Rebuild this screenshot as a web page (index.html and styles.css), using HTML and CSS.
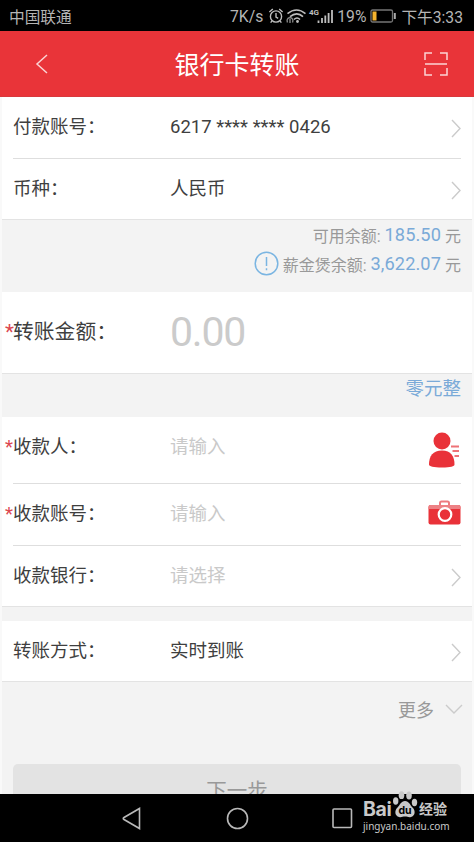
FILE: index.html
```html
<!DOCTYPE html>
<html lang="zh-CN">
<head>
<meta charset="utf-8">
<title>银行卡转账</title>
<link rel="stylesheet" href="styles.css">
</head>
<body>
<div class="phone">
  <div class="status">
    <span class="carrier">中国联通</span>
    <span class="speed">7K/s</span>
    <svg class="status-icons" width="67" height="20" viewBox="0 0 67 20" fill="none" stroke="#bdbdbd" stroke-width="1.4">
      <circle cx="8" cy="10.500" r="5.600"/><path d="M8 7v4l2.200 1.300M1.400 5.900l3.400-3M14.600 5.900l-3.400-3M4 15l-1.400 1.600M12 15l1.400 1.600"/>
      <path d="M19.500 7.700Q28.500 .3 37.500 7.700M22 10.700Q29 5 35 10.700M26 13.500Q29 10.500 32 13.500" stroke-width="1.600"/>
      <circle cx="29.500" cy="15.500" r="1.400" fill="#bdbdbd" stroke="none"/>
      <path d="M19.500 16.500q-1.500-4 2.500-5 4 1 2.500 5M22 13v4" stroke="#858585"/>
      <path d="M50.500 17v-2.500M54 17v-5M57.300 17v-7.500M60.600 17v-10M64 17v-13" stroke-width="1.800"/>
      <text class="net" x="41" y="9">4G</text>
    </svg>
    <span class="percent">19%</span>
    <svg class="battery" width="26" height="14" viewBox="0 0 26 14"><rect x="1" y="1" width="21.500" height="12" rx="1.500" fill="none" stroke="#757575" stroke-width="1.300"/><rect x="2.500" y="2.500" width="4" height="9" fill="#f5b32e"/><path d="M24.800 4v6" stroke="#aaa" stroke-width="2"/></svg>
    <span class="clock">下午3:33</span>
  </div>
  <header class="header">
    <svg class="back" width="14" height="20" viewBox="0 0 14 20"><path d="M12 1L2 10l10 9"/></svg>
    <h1>银行卡转账</h1>
    <svg class="scan" width="24" height="24" viewBox="0 0 24 24"><path d="M1 8V1h7M16 1h7v7M23 16v7h-7M8 23H1v-7M1 12h22"/></svg>
  </header>
  <main class="content">
    <section class="group">
      <div class="row lined">
        <span class="label">付款账号：</span><span class="value">6217 **** **** 0426</span>
        <svg class="chevron" width="10" height="19" viewBox="0 0 10 19"><path d="M1 1l8 8.500L1 18"/></svg>
      </div>
      <div class="row">
        <span class="label">币种：</span><span class="value">人民币</span>
        <svg class="chevron" width="10" height="19" viewBox="0 0 10 19"><path d="M1 1l8 8.500L1 18"/></svg>
      </div>
    </section>
    <div class="balances">
      <div class="balance">可用余额: <b>185.50</b> 元</div>
      <div class="balance"><svg class="info" width="25" height="25" viewBox="0 0 25 25"><circle cx="12.500" cy="12.500" r="11.300"/><path d="M12.500 6v9M12.500 17.200v2"/></svg>薪金煲余额: <b>3,622.07</b> 元</div>
    </div>
    <section class="group">
      <div class="row amount"><i class="star">*</i><span class="label">转账金额：</span><span class="figure">0.00</span></div>
    </section>
    <div class="words">零元整</div>
    <section class="group">
      <div class="row payee lined"><i class="star">*</i><span class="label">收款人：</span><span class="value hint">请输入</span>
        <svg class="person" width="32" height="36" viewBox="0 0 32 36"><circle cx="14" cy="9" r="8.500" fill="#e93239"/><path d="M1 32.500C1 24 5 18.500 14 18.500s12.500 6 12.500 14c0 2-4 3-12.500 3S1 34.500 1 32.500z" fill="#e93239"/><path d="M23 14.500h8M24.500 19h6.500M26.500 24h4.500" stroke="#ee7277" stroke-width="2"/></svg>
      </div>
      <div class="row account lined"><i class="star">*</i><span class="label">收款账号：</span><span class="value hint">请输入</span>
        <svg class="camera" width="33" height="25" viewBox="0 0 33 25"><path d="M12 6V3q0-1.500 1.500-1.500h6Q21 1.500 21 3v3" fill="none" stroke="#ed7b80" stroke-width="2"/><rect x=".5" y="5" width="32" height="19.500" rx="2" fill="#e93239"/><path d="M.5 9V7q0-2 2-2h28q2 0 2 2v2z" fill="#ed8185"/><circle cx="17" cy="14.500" r="6.300" fill="#e93239" stroke="#fff" stroke-width="2.200"/></svg>
      </div>
      <div class="row"><span class="label">收款银行：</span><span class="value hint">请选择</span>
        <svg class="chevron" width="10" height="19" viewBox="0 0 10 19"><path d="M1 1l8 8.500L1 18"/></svg>
      </div>
    </section>
    <section class="group method">
      <div class="row"><span class="label">转账方式：</span><span class="value">实时到账</span>
        <svg class="chevron" width="10" height="19" viewBox="0 0 10 19"><path d="M1 1l8 8.500L1 18"/></svg>
      </div>
    </section>
    <div class="more">更多<svg class="chevron" width="18" height="10" viewBox="0 0 18 10"><path d="M1 1l8 8 8-8"/></svg></div>
    <div class="next">下一步</div>
  </main>
  <nav class="nav">
    <svg width="20" height="23" viewBox="0 0 20 23"><path d="M17.500 1.500v20L2 12.500q-1.500-1 0-2z"/></svg>
    <svg width="23" height="23" viewBox="0 0 23 23"><circle cx="11.500" cy="11.500" r="10"/></svg>
    <svg width="21" height="21" viewBox="0 0 21 21"><rect x="1" y="1" width="18.500" height="18.500" rx="1"/></svg>
    <div class="mark">
      <div class="brand"><span class="bai">Bai</span><svg class="paw" width="26" height="27" viewBox="0 0 26 27"><ellipse cx="3.700" cy="10" rx="2.700" ry="3.700"/><ellipse cx="9.500" cy="4.200" rx="2.800" ry="3.900"/><ellipse cx="17" cy="4.500" rx="2.800" ry="3.900"/><ellipse cx="22.500" cy="11.500" rx="2.700" ry="3.700"/><path d="M13 10c4 0 5 4 7.500 6.500 3.500 3.500 2.500 8.500-1.500 9.500-2.500.6-3.500-.5-6-.5s-3.500 1.100-6 .5c-4-1-5-6-1.500-9.500C8 14 9 10 13 10z"/><text x="6.500" y="23">du</text></svg><span class="jy">经验</span></div>
      <div class="site">jingyan.baidu.com</div>
    </div>
  </nav>
</div>
</body>
</html>
```
FILE: styles.css
```css
* { box-sizing: border-box; }
body { margin: 0; background: #f3f3f3; }
.phone {
  width: 474px; height: 842px; overflow: hidden;
  display: flex; flex-direction: column;
  font-family: Roboto, "Noto Sans CJK SC", sans-serif;
  color: #3f3f3f;
}
svg { flex: none; display: block; }
.status {
  height: 31px; flex: none; background: #000; color: #b5b5b5;
  display: flex; align-items: center; padding: 1px 11px 0 9px;
  font-size: 15.700px; white-space: nowrap;
}
.speed { margin-left: auto; }
.status-icons { margin-left: 5px; }
.net { font-size: 8px; font-weight: 700; fill: #bdbdbd; stroke: none; }
.percent { margin-left: 2px; }
.battery { margin: 0 5px 0 4px; }
.header {
  height: 66px; flex: none; background: #e93439; color: #fff;
  display: grid; grid-template-columns: 80px 1fr 80px; align-items: center;
  border-bottom: 1px solid #d8393d;
}
.header h1 { margin: 0; padding-top: 5px; font-size: 25px; font-weight: 400; line-height: 36px; text-align: center; }
.header svg { fill: none; stroke: #fbd3d4; stroke-width: 1.500; }
.back { margin-left: 35px; }
.scan { margin-left: 30px; }
.content {
  flex: 1; min-height: 0; overflow: hidden; background: #f3f3f3;
  display: flex; flex-direction: column;
  border: solid #f9f9f9; border-width: 0 2px;
}
.group { flex: none; background: #fff; margin: 0 -2px; border-bottom: 1px solid #e3e3e3; }
.row {
  height: 60px; margin: 0 13px; position: relative;
  display: flex; align-items: center; font-size: 18.500px; line-height: 28px;
}
.lined { height: 62px; padding-bottom: 1px; border-bottom: 1px solid #dedede; }
.label { width: 157px; flex: none; white-space: nowrap; }
.value { flex: 1; }
.hint { color: #c9c9c9; }
.chevron { fill: none; stroke: #cbcbcb; stroke-width: 1.400; }
.row > .chevron { margin-top: 2px; }
.star { position: absolute; left: -8px; font-style: normal; color: #dc4650; }
.balances {
  flex: none; height: 72px; padding-right: 11px;
  display: flex; flex-direction: column; align-items: flex-end;
}
.balance {
  height: 29px; display: flex; align-items: center; white-space: pre;
  font-size: 16px; color: #999;
}
.balance b { font-weight: 400; font-size: 18.200px; letter-spacing: .1px; color: #7aaad8; }
.info { margin-right: 4px; fill: none; stroke: #7ab5e2; stroke-width: 1.500; }
.amount { height: 81px; padding-bottom: 1px; font-size: 20.800px; }
.figure { font-size: 41px; line-height: 48px; letter-spacing: -1.200px; color: #cbcbcb; padding-bottom: 1px; }
.words {
  flex: none; height: 43px; padding: 0 11px; line-height: 31px;
  text-align: right; font-size: 18.500px; color: #7aaad8;
}
.payee { height: 67px; padding-bottom: 6px; }
.person { margin: 6px 1px 0 0; }
.account { padding-bottom: 1px; }
.camera { margin-bottom: 4px; }
.method { margin-top: 14px; }
.more {
  flex: none; height: 54px; padding: 0 9px; gap: 11px;
  display: flex; align-items: center; justify-content: flex-end;
  font-size: 18px; color: #999;
}
.next {
  flex: none; height: 60px; margin: 28px 11px 0; border-radius: 5px;
  background: #e3e3e3; color: #999; text-align: center; font-size: 20.500px; line-height: 54px;
}
.nav {
  height: 48px; flex: none; background: #000; position: relative;
  display: flex; align-items: center; padding-left: 122px;
}
.nav > svg { fill: none; stroke: #b9b9b9; stroke-width: 1.600; }
.nav > svg + svg { margin-left: 84px; }
.nav > svg + svg + svg { margin-left: 83px; }
.mark { position: absolute; left: 363px; top: -3px; color: #c9c9c9; }
.brand { display: flex; align-items: flex-end; height: 27px; }
.bai { font: 700 19.500px/17px Inter, sans-serif; width: 29px; letter-spacing: -.4px; }
.paw { fill: #c9c9c9; }
.paw text { font: 700 10.500px Inter, sans-serif; fill: #000; }
.jy { margin-left: 1px; font-size: 14px; font-weight: 700; line-height: 17px; }
.site { font: 10px/16px "Noto Sans", sans-serif; white-space: nowrap; }
```
